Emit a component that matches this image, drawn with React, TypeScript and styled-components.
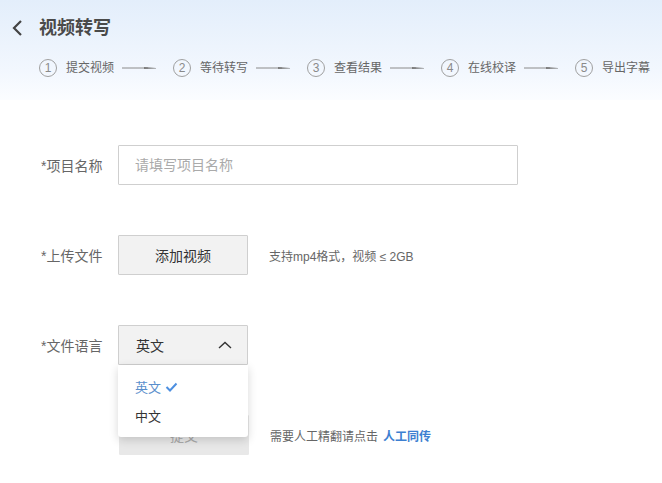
import React from 'react';
import styled, {createGlobalStyle} from 'styled-components';

const GlobalStyle = createGlobalStyle`
  html, body {
    margin: 0;
    padding: 0;
    background: #fff;
    font-family: "Liberation Sans", "Noto Sans CJK SC", sans-serif;
  }
`;

const Page = styled.div`
  width: 662px;
  height: 483px;
  overflow: hidden;
  background: #fff;
`;

const Header = styled.div`
  height: 100px;
  box-sizing: border-box;
  padding: 15px 0 0 12px;

  background: linear-gradient(to bottom, #e3eefb 0%, #f2f7fe 70%, #fbfdff 100%);
`;

const TitleRow = styled.div`
  display: flex;
  align-items: center;
  gap: 16px;

  height: 22px;
  margin-top: 2px;
`;

const Title = styled.h1`
  margin: 0;

  font-size: 18px;
  font-weight: 700;
  line-height: 22px;
  color: #4a4a4a;
`;

const Steps = styled.div`
  display: flex;
  align-items: center;

  margin: 19px 0 0 27px;
  height: 20px;
`;

const Step = styled.div`
  display: flex;
  align-items: center;
`;

const StepNum = styled.span`
  display: flex;
  justify-content: center;
  align-items: center;

  width: 16px;
  height: 16px;
  border: 1px solid #a0a0a0;
  border-radius: 50%;

  font-size: 12px;
  color: #8a8a8a;
`;

const StepText = styled.span`
  margin-left: 9px;
  width: 48px;

  font-size: 12px;
  line-height: 16px;
  color: #666;
  white-space: nowrap;
`;

const StepArrow = styled.svg`
  margin: 0 17px 0 8px;
`;

const Form = styled.div`
  display: flex;
  flex-direction: column;
  gap: 50px;

  padding: 45px 0 0 41px;
`;

const Row = styled.div`
  position: relative;
  display: flex;
  align-items: center;

  height: 40px;
`;

const Label = styled.span`
  width: 77px;

  font-size: 14px;
  color: #666;
`;

const TextInput = styled.input`
  box-sizing: border-box;
  width: 400px;
  height: 40px;
  padding: 0 16px;

  border: 1px solid #cfcfcf;
  border-radius: 1px;
  outline: none;

  font-family: inherit;
  font-size: 14px;
  color: #333;

  &::placeholder {
    color: #aaa;
  }
`;

const GreyButton = styled.button<{disabled?: boolean}>`
  box-sizing: border-box;
  width: 130px;
  height: 40px;
  margin-left: ${props => props.disabled ? '1px' : '0'};

  background: ${props => props.disabled ? '#e8e8e8' : '#f2f2f2'};
  border: 1px solid ${props => props.disabled ? '#e8e8e8' : '#cfcfcf'};
  border-radius: 1px;

  font-family: inherit;
  font-size: 14px;
  color: ${props => props.disabled ? '#aaa' : '#333'};
`;

const Hint = styled.span`
  margin-left: 21px;

  font-size: 12px;
  color: #666;
`;

const HintLink = styled.a`
  margin-left: 5px;

  font-weight: 700;
  color: #3d7fd1;
  text-decoration: none;
`;

const SelectBox = styled.div`
  display: flex;
  align-items: center;
  justify-content: space-between;
  box-sizing: border-box;

  width: 130px;
  height: 40px;
  padding: 0 15px 0 17px;

  background: #f2f2f2;
  border: 1px solid #cfcfcf;
  border-radius: 1px;

  font-size: 14px;
  color: #333;
`;

const Menu = styled.ul`
  position: absolute;
  top: 40px;
  left: 77px;
  z-index: 2;

  box-sizing: border-box;
  width: 130px;
  margin: 0;
  padding: 7px 0;

  list-style: none;
  background: #fff;
  border-radius: 0 0 3px 3px;
  box-shadow: 0 3px 10px rgba(0, 0, 0, 0.16);
`;

const MenuItem = styled.li<{active?: boolean}>`
  display: flex;
  align-items: center;
  gap: 4px;

  height: 29px;
  padding-left: 17px;

  font-size: 13px;
  color: ${props => props.active ? '#5a8fcc' : '#333'};
`;

const steps = ['提交视频', '等待转写', '查看结果', '在线校译', '导出字幕'];

const Arrow = () => (
    <StepArrow width="34" height="6" viewBox="0 0 34 6">
        <line x1="0" y1="3" x2="26" y2="3" stroke="#8a8a8a" strokeWidth="1"/>
        <polygon points="22,2 34,3 34,3.5 22,4" fill="#7a7a7a"/>
    </StepArrow>
);

export default function App() {
    return (
        <Page>
            <GlobalStyle/>
            <Header>
                <TitleRow>
                    <svg width="11" height="18" viewBox="0 0 11 18">
                        <path d="M9 2 L2 9 L9 16" fill="none" stroke="#444" strokeWidth="2.2"/>
                    </svg>
                    <Title>视频转写</Title>
                </TitleRow>
                <Steps>
                    {steps.map((s, i) =>
                        <Step key={i}>
                            <StepNum>{i + 1}</StepNum>
                            <StepText>{s}</StepText>
                            {i < steps.length - 1 && <Arrow/>}
                        </Step>)}
                </Steps>
            </Header>
            <Form>
                <Row>
                    <Label>*项目名称</Label>
                    <TextInput placeholder="请填写项目名称"/>
                </Row>
                <Row>
                    <Label>*上传文件</Label>
                    <GreyButton>添加视频</GreyButton>
                    <Hint>支持mp4格式，视频 ≤ 2GB</Hint>
                </Row>
                <Row>
                    <Label>*文件语言</Label>
                    <SelectBox>
                        <span>英文</span>
                        <svg width="14" height="8" viewBox="0 0 14 8">
                            <path d="M1 7 L7 1.5 L13 7" fill="none" stroke="#333" strokeWidth="1.4"/>
                        </svg>
                    </SelectBox>
                    <Menu>
                        <MenuItem active>
                            英文
                            <svg width="13" height="10" viewBox="0 0 13 10">
                                <path d="M1.5 5 L5 8.5 L11.5 1.5" fill="none" stroke="#4d8fe0" strokeWidth="2"/>
                            </svg>
                        </MenuItem>
                        <MenuItem>中文</MenuItem>
                    </Menu>
                </Row>
                <Row>
                    <Label/>
                    <GreyButton disabled>提交</GreyButton>
                    <Hint>需要人工精翻请点击<HintLink>人工同传</HintLink></Hint>
                </Row>
            </Form>
        </Page>
    );
}
